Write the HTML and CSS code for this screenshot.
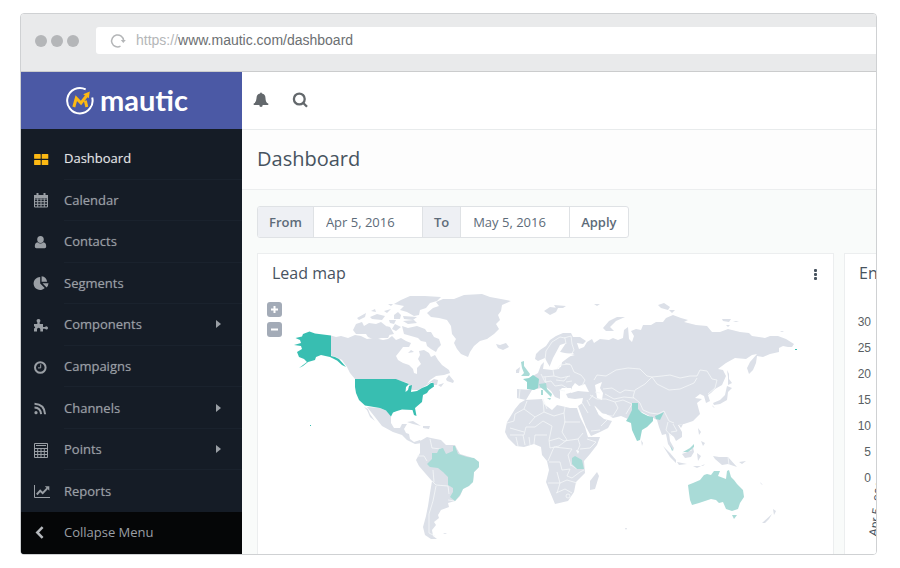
FILE: index.html
```html
<!DOCTYPE html>
<html lang="en">
<head>
<meta charset="utf-8">
<title>Mautic – Dashboard</title>
<link rel="stylesheet" href="styles.css">
</head>
<body>
<div class="window">
  <header class="chrome">
    <div class="dots"><span></span><span></span><span></span></div>
    <div class="address">
      <svg class="reload" viewBox="0 0 16 16"><path d="M10.5 13.2A6 6 0 1 1 13.6 7.5"/><path class="tip" d="M10.8 7h5l-2.5 3z"/></svg>
      <span class="scheme">https://</span><span>www.mautic.com/dashboard</span>
    </div>
  </header>
  <div class="app">
    <aside class="sidebar">
      <a class="brand" href="#">
        <svg viewBox="0 0 30 30"><path class="ring" d="M20.7 3.4A12.7 12.7 0 1 0 27.2 11.600"/><path class="zig" d="M8.800 21L11.300 12.200l4.700 4.800 5.500-7"/><path class="head" d="M18.200 8.200L24.800 5.600l-1 6.600z"/><path class="leg" d="M20.300 14.600l1.500 6.400"/></svg>
        <span>mautic</span>
      </a>
      <nav class="menu">
        <a class="active" href="#"><svg viewBox="0 0 16 16"><path d="M1.700 3h5.400q.6 0 .6.600v3.600q0 .6-.6.600H1.700q-.6 0-.6-.6V3.600q0-.6.600-.6zM9.300 3h5.400q.6 0 .6.600v3.600q0 .6-.6.600H9.300q-.6 0-.6-.6V3.600q0-.6.600-.6zM1.700 9h5.400q.6 0 .6.600v3.800q0 .6-.6.600H1.700q-.6 0-.6-.6V9.600q0-.6.600-.6zM9.300 9h5.400q.6 0 .6.600v3.800q0 .6-.6.600H9.300q-.6 0-.6-.6V9.600q0-.6.600-.6z"/></svg><span>Dashboard</span></a>
        <a href="#"><svg viewBox="0 0 16 16"><path class="line" d="M1.500 3.500h13v11.500h-13zM1.500 7h13M1.500 9.700h13M1.500 12.300h13M4.700 6.500v8.500M8 6.500v8.500M11.300 6.500v8.500"/><path d="M1 3h14v3H1zM3.500 1h2v3.500h-2zM10.500 1h2v3.500h-2z"/></svg><span>Calendar</span></a>
        <a href="#"><svg viewBox="0 0 16 16"><path d="M7.500 2a3.200 3.400 0 0 1 0 7a3.200 3.400 0 0 1 0-7zM4.500 8.300q3 2.400 6 0q2.700.5 2.700 4.200q0 1.700-1.500 1.700H3.300q-1.500 0-1.500-1.700q0-3.700 2.700-4.200z"/></svg><span>Contacts</span></a>
        <a href="#"><svg viewBox="0 0 16 16"><path d="M7.200 2v6.500l4.500 4.600A6.500 6.500 0 1 1 7.200 2zM8.600 1.200a6.300 6.300 0 0 1 5.500 5.600H8.600zM9.500 8.300h6a6.500 6.500 0 0 1-1.900 4.200z"/></svg><span>Segments</span></a>
        <a class="more" href="#"><svg viewBox="0 0 16 16"><path d="M1 7h3.300V5.200q-1.100-1-.6-2.200Q4.200 2 5.500 2t1.800 1q.5 1.200-.6 2.200V7H10v3h2q.8-1 1.900-.6q1.100.4 1.100 1.500t-1.100 1.600q-1.100.4-1.900-.7h-2V14.500H7.300V12.200q-.2-1.500-1.700-1.500T4 12.200v2.300H1v-3l1.200-.8Q2.200 9.500 1 9.300z"/></svg><span>Components</span></a>
        <a href="#"><svg viewBox="0 0 16 16"><circle class="thick" cx="7.300" cy="8.500" r="5.300"/><path class="line" d="M7.700 5.300v3.600H5"/></svg><span>Campaigns</span></a>
        <a class="more" href="#"><svg viewBox="0 0 16 16"><path class="thick" d="M1.500 3.700q10 .4 10.600 10.500M1.500 7.600q6 .3 6.600 6.600"/><circle cx="3" cy="12.700" r="1.600"/></svg><span>Channels</span></a>
        <a class="more" href="#"><svg viewBox="0 0 16 16"><path class="line" d="M1.500 1.500h13v14h-13zM1.500 6.500h13M1.500 9.500h13M1.500 12.500h13M4.700 6v9.500M8 6v9.500M11.300 6v9.500M3 3.500h10"/></svg><span>Points</span></a>
        <a href="#"><svg class="wide" viewBox="0 0 18 16"><path class="line" d="M1.500 2v12.500H17"/><path class="thick" d="M3.800 11.500L7.200 7.700l2.500 2.400 4.500-4.700"/><path d="M11.800 3.300h4.500v4.500z"/></svg><span>Reports</span></a>
      </nav>
      <button class="collapse" type="button"><svg viewBox="0 0 16 16"><path d="M9.600 3.200L4.300 8.500l5.300 5.300"/></svg><span>Collapse Menu</span></button>
    </aside>
    <main class="main">
      <div class="topbar">
        <button type="button" aria-label="Notifications"><svg viewBox="0 0 16 16"><path d="M8 .5q.9 0 .9 1q3.600.7 3.600 4.700q0 3.900 2.800 5.800H.7q2.800-1.900 2.800-5.800Q3.500 2.200 7.100 1.500q0-1 .9-1zM6.200 12.500h3.600Q9.700 15 8 15t-1.800-2.500z"/><path d="M.7 11.500h14.600v1.500H.7z"/></svg></button>
        <button type="button" aria-label="Search"><svg viewBox="0 0 16 16"><circle class="glass" cx="7.300" cy="7" r="5.400"/><path class="glass" d="M11 10.800l4 4"/></svg></button>
      </div>
      <h1>Dashboard</h1>
      <div class="content">
        <form class="range">
          <label for="from">From</label>
          <input id="from" type="text" value="Apr 5, 2016">
          <label for="to">To</label>
          <input id="to" type="text" value="May 5, 2016">
          <button type="button">Apply</button>
        </form>
        <div class="panels">
          <section class="panel">
            <div class="panel-head"><h2>Lead map</h2><button class="kebab" type="button" aria-label="Options"><i></i><i></i><i></i></button></div>
            <div class="map">
              <div class="zoomer"><button type="button" aria-label="Zoom in"><svg viewBox="0 0 15 15"><path d="M4 7.500h7M7.500 4v7"/></svg></button><button type="button" aria-label="Zoom out"><svg viewBox="0 0 15 15"><path d="M4 7.500h7"/></svg></button></div>
              <svg class="world" viewBox="258 290 575 258">
                <g class="land">
                  <path d="M331 333.500L336 335 341 334 348 336 355 333 361 334 367 337 375 336 383 338 388 337 392 334 396 338 401 336 406 339 411 341 409 345 403 345 400 349 396 354 398 358 403 361 409 363 413 367 414 371 417 372 417 366 421 362 418 357 420 353 419 349 424 348 429 351 431 355 435 353 438 358 442 363 449 368 450 371 444 373 436 374 430 378 427 382 434 377 438 378 437 383 433 383 432 380 427 383 418 388 412 388 408 381 400 379 396 377 355 377 350 371 347 365 342 358 336 355 331 353.500z"/>
                  <path d="M446 377L449 373 454 379 453 381 447 379zM438 383L444 381 441 385z"/>
                  <path d="M353 328L356 322 362 320 364 324 369 321 376 322 381 320 386 324 391 330 388 336 381 336 375 338 368 335 366 332 356 332zM357 316L366 311 365 315 359 318zM370 315L377 312 385 314 382 318 372 317zM371 309L375 307 376 310zM384 309L391 307 387 311zM389 318L396 318 394 322 390 321zM395 322L401 325 396 329 392 327zM382 323L390 325 394 332 389 333z"/>
                  <path d="M402 324L408 326 417 324 425 327 427 330 431 330 434 335 439 337 441 343 438 346 436 350 431 347 427 344 426 340 421 339 418 336 411 334 404 332zM403 319L414 318 417 321 408 322zM394 313L398 310 401 313 400 317 394 317zM411 348L414 350 408 351z"/>
                  <path d="M394 302L401 298 410 294 425 294 441 295 437 299 430 301 426 306 420 308 419 313 414 314 407 310 400 308 404 304z"/><path d="M403 314L417 315 413 318 404 317zM388 302L393 302 391 304z"/>
                  <path d="M427 311L433 306 439 304 436 300 443 297 454 297 464 293 482 292 490 295 501 297 511 299 502 303 501 309 498 313 500 318 496 322 499 327 494 332 487 337 480 339 474 344 470 350 468 355 461 352 457 347 454 341 456 337 452 332 451 324 447 318 439 316 431 315z"/>
                  <path d="M496 342L500 343 506 341 509 345 503 348 498 346z"/>
                  <path d="M367 405L380 406 387 409 391 414 391 421 394 426 400 426 402 422 407 422 404 427 406 431 409 432 410 437 414 440 420 438 422 441 415 442 407 438 402 433 393 430 382 424 375 415zM364 405L367 408 370 415 375 419 370 412 368 407zM407 420L413 419 421 424 413 422zM423 424L430 424 429 427 423 426z"/>
                  <path d="M420 439L427 435 431 436 441 438 446 443 455 443 457 447 460 452 470 455 479 460 479 465 474 470 473 480 463 487 460 494 455 499 448 501 449 505 441 508 438 513 439 516 434 520 436 523 432 528 433 534 437 537 431 537 425 533 423 525 426 514 428 504 430 491 432 479 425 471 419 464 416 458 420 451z"/><path d="M443 531L447 531 445 532z"/>
                  <path d="M517 387L532 388 529 393 526 398 521 397 517 396zM516 368L520 365 519 371 516 371z"/>
                  <path d="M536 352L540 348 546 344 550 338 556 334 563 331 571 331 573 335 580 335 586 339 583 342 577 341 579 347 584 345 587 340 592 337 594 341 600 337 609 338 613 336 618 338 623 336 624 328 628 325 629 337 632 340 634 334 631 329 636 327 641 328 643 323 651 323 656 320 663 320 666 316 673 313 681 316 688 318 684 320 696 323 707 324 712 330 720 330 728 327 740 330 749 331 752 334 765 336 770 334 778 334 786 337 794 342 792 345 788 345 783 344 779 346 779 350 770 352 763 355 757 354 756 361 753 368 749 372 747 366 750 360 757 352 752 353 746 357 735 356 726 361 718 367 723 368 726 374 722 383 715 387 711 391 708 393 710 399 706 401 704 394 700 392 695 396 702 397 697 401 700 412 693 419 684 422 678 423 682 430 682 435 676 439 674 435 669 431 670 439 674 446 673 449 668 442 666 432 662 433 659 425 657 418 638 408 631 411 628 417 621 414 613 416 606 412 600 411 595 404 582 401 583 396 575 397 568 396 566 392 573 390 571 386 562 386 560 388 560 397 555 395 551 389 546 385 541 386 532 388 527 386 529 376 538 371 541 363 544 360 543 367 552 368 559 367 561 361 569 355 574 351 564 352 560 350 560 357 554 361 550 365 547 360 545 356 538 359 535 357z"/>
                  <path d="M544 309L550 305 558 306 556 310 550 313zM554 303L566 304 563 306 556 306zM594 302L600 302 597 304zM603 326L609 319 617 315 625 315 616 319 610 325 614 329 606 329zM658 303L664 301 670 305 668 308 661 306zM669 308L675 308 672 311zM722 317L731 317 729 320 723 319zM733 319L739 319 736 320zM726 323L730 323 728 325zM780 329L784 329 782 330z"/>
                  <path d="M727 368L729 372 729 377 732 381 728 383 728 375zM727 384L732 386 728 390 727 398 720 402 714 403 713 401 720 398 725 393zM712 403L715 406 713 405zM698 426L701 430 699 433zM701 439L705 441 703 444zM679 423L683 422 681 426zM641 438L643 441 642 444z"/>
                  <path d="M515 407L520 401 525 398 542 397 544 402 552 408 557 403 570 406 577 406 580 415 585 425 588 435 600 435 597 443 590 452 584 459 585 471 576 480 574 490 568 499 555 502 550 490 546 480 549 468 547 459 542 453 541 445 534 442 524 445 516 444 508 436 505 430 507 420z"/>
                  <path d="M597 470L599 474 595 487 590 488 590 479z"/><path d="M578 404L587 398 594 403 599 413 604 417 612 419 608 426 600 430 591 434 586 425z"/>
                  <path d="M663 444L670 451 676 458 676 461 670 455zM677 460L687 462 679 463zM682 452L687 450 693 445 694 450 691 455 685 456zM697 451L701 454 698 459zM693 464L703 464 705 462 697 466zM713 454L719 455 728 455 737 465 728 462 722 463 715 457zM739 460L746 459 742 462zM760 480L763 483 761 482zM773 507L776 509 774 513zM762 521L772 512 769 517 765 521zM625 526L627 526 626 528z"/>
                </g>
                <g class="sea">
                  <path d="M572 385L575 381 579 384 585 382 589 390 578 389 571 391zM595 383L602 380 600 386 603 391 602 398 597 396zM553 356L560 343 566 341 560 350 575 353 563 356 561 365 555 367 549 366zM595 404L604 413 614 414 606 415 599 413zM576 448L579 449 578 452z"/>
                </g>
                <g class="borders">
                  <path d="M545 358L546 349 552 340 560 335 565 336 566 342M564 336L571 334 572 342 574 348 571 353M565 361L571 363 574 370 581 373 585 378 582 384M553 368L554 374 561 376 570 374M541 372L545 380 551 379 555 384 562 383 567 386M543 375L554 374M546 381L545 375M556 378L564 379 568 374M559 388L565 389M557 367L560 363 570 362M566 380L572 379M594 378L597 373 606 374 616 368 628 366 640 367 647 374 652 375 662 374 670 373 680 376 690 374 697 374 700 368 707 369 712 377 717 378 715 386 708 392M652 375L645 382 635 388 633 395 640 401 643 408 650 411 658 412 664 409 669 419 674 421M652 375L657 382 669 388 680 387 694 381 697 376M603 387L612 386 620 391 625 388 634 389M605 392L614 397 624 395 634 396M590 393L597 397 606 397 615 400 618 406 613 414M615 400L623 398 632 402 626 412M589 398L593 393M587 398L590 404M668 420L666 428 671 434M673 422L677 429 671 430M595 390L600 391"/>
                  <path d="M527 399L524 407 515 412 514 419 507 421M524 407L535 415 544 410 543 397M544 410L554 414 564 411 565 405M564 411L565 420 562 430 567 438 559 444 550 446 549 438 552 424 543 419 535 425 526 425 524 433 510 433M535 415L529 422M564 420L580 420M534 442L535 433 547 433M549 439L559 436 564 439 578 437 583 431M578 437L580 443 577 450M587 437L596 440 590 446 580 447M549 460L560 460 562 468 570 467M548 481L560 481 557 470M560 481L557 491M560 481L567 478 577 481M556 491L565 487 572 491M571 464L568 453 572 447 554 445 548 459M570 467L567 474 572 476 580 470 584 468M571 463L577 467M516 435L518 444M523 433L525 443M529 435L530 443M543 397L547 407M510 426L524 430M417 454L424 454 427 459M430 437L432 446 441 447M432 479L436 483 448 484M436 484L433 499 429 512 429 531 435 534M433 468L434 480M448 484L449 492M448 498L455 499M582 401L588 411M601 424L607 418M591 429L600 428M728 455L729 463M520 387L519 397M682 451L692 448"/>
                  <circle cx="568" cy="494" r="2"/>
                </g>
                <g class="usa">
                  <path d="M295.500 336L302 334.500 303 332 309.500 329.500 315 331.500 331 333.500V354L335 355 339 357 346 365 342 363 337 358.500 330 355 321 353 316 355 315 358 308 360 303 364 299 366 307 360 304 357 299 355 297 350 302 347 301 344 294 343 301 341 300 338z"/>
                  <path d="M355 377H396L401 379 409 382 406 385 405.500 390 408 388 409 384 412 383 411 390 417 389 422 386 427 384 431 381 433.500 381 434 384.500 429 388 427 391 423 393 422 400 415 406 416.500 414 414 413 412.500 408 402 407.500 397 409 393 410.500 391 414.500 386 408.500 380 406 371 404.500 365 403.500 359 398 356 391 355 385z"/><path d="M310 423h1v1h-1zM795 347h2v1h-2z"/>
                </g>
                <g class="mid">
                  <path d="M632 401L638 401 638 407 642 411 648 414 653 415 653 419 647 425 642 428 640 438 637 439 632 428 631 421 626 419 628 416 632 408zM655 414L660 412 664 410 660 418 656 417z"/>
                  <path d="M523 377L529 376 533 373 539 377 538 386 534 388 527 387 527 380z"/>
                </g>
                <g class="light">
                  <path d="M521 360L524 359 524 364 530 372 529 374 521 374 524 371 522 366zM539 382L546 381 547 387 552 392 551 395 544 388 540 385zM541 388h2v5h-2zM547 396L551 396 550 398z"/>
                  <path d="M427 462L432 457 432 451 437 451 439 447 443 446 446 452 453 449 453 444 455 444 458 452 467 455 474 456 479 460 479 465 474 470 473 480 469 484 463 487 460 493 455 499 450 495 453 490 453 486 448 483 448 475 443 470 438 466 430 465z"/>
                  <path d="M572 456L575 454 582 458 584 467 577 467 572 462z"/>
                  <path d="M688 483L693 481 700 478 704 473 707 472 711 473 714 469 720 469 718 474 726 477 727 469 729 468 731 475 734 478 737 482 743 488 744 495 740 501 738 507 732 509 726 507 723 500 719 501 716 498 711 497 705 499 699 501 692 503 690 498 689 491zM732 513L737 513 734 517zM670 443L673 448 672 449zM683 450L690 446 694 442 694 445 688 450z"/>
                </g>
              </svg>
            </div>
          </section>
          <section class="panel side">
            <h2>Engagement</h2>
            <ul class="ticks"><li>30</li><li>25</li><li>20</li><li>15</li><li>10</li><li>5</li><li>0</li></ul>
            <span class="date">Apr 5, 2016</span>
          </section>
        </div>
      </div>
    </main>
  </div>
</div>
</body>
</html>
```
FILE: styles.css
```css
* { box-sizing: border-box; }
body { margin: 0; background: #fff; font-family: "Open Sans", "Noto Sans", sans-serif; color: #47535f; }
button, input { font: inherit; color: inherit; border: 0; padding: 0; margin: 0; background: none; }
a { color: inherit; text-decoration: none; }
h1, h2 { margin: 0; font-weight: 400; }
svg { display: block; flex: none; }

.window { display: flex; flex-direction: column; height: calc(100vh - 26px); min-height: 480px; margin: 13px 23px 13px 20px; border: 1px solid #cfd1d3; border-radius: 4px; overflow: hidden; }
.chrome { flex: none; display: flex; align-items: center; gap: 17px; height: 58px; padding: 0 0 4px 14px; background: #e9eaeb; border-bottom: 1px solid #cbcccd; }
.dots { display: flex; gap: 4px; }
.dots span { width: 12px; height: 12px; border-radius: 50%; background: #b4b6b8; }
.address { flex: 1; display: flex; align-items: center; height: 27px; padding-left: 14px; background: #fff; border-radius: 3px 0 0 3px; font: 14px/27px "Liberation Sans", Arial, sans-serif; color: #6c6f72; }
.reload { width: 16px; height: 16px; margin-right: 10px; }
.reload path { fill: none; stroke: #b4b6b8; stroke-width: 1.500; }
.reload .tip { fill: #b4b6b8; stroke: none; }
.scheme { color: #b4b6b8; }

.app { flex: 1; display: flex; min-height: 0; }
.sidebar { flex: none; display: flex; flex-direction: column; width: 221px; background: #151c26; color: #9a9fa5; font-size: 13px; }
.brand { flex: none; display: flex; align-items: center; justify-content: center; gap: 5px; height: 57px; padding-right: 10px; background: #4b59a5; color: #fff; font: 700 29px/40px Lato, sans-serif; }
.brand svg { width: 30px; height: 30px; }
.brand span { margin-bottom: 2px; }
.brand path { fill: none; stroke: #fdb913; stroke-width: 3; }
.brand .ring { stroke: #fff; stroke-width: 2; }
.brand .head { fill: #fdb913; stroke: none; }
.menu { flex: 1; display: grid; grid-auto-rows: 1fr; padding-top: 9px; }
.menu a { display: flex; align-items: center; padding-left: 12px; }
.menu svg { width: 16px; height: 16px; margin-right: 15px; fill: currentColor; }
.menu svg.wide { width: 18px; margin-right: 13px; }
.menu span { flex: 1; align-self: stretch; display: flex; align-items: center; border-bottom: 1px solid #1a222d; text-shadow: 0 0 1px rgba(154, 159, 165, .5); }
.menu a:last-child span { border-bottom: 0; }
.menu .active span { color: #e4e5e7; }
.menu .active svg { fill: #fdb913; }
.menu .line { fill: none; stroke: currentColor; stroke-width: 1; }
.menu .thick { fill: none; stroke: currentColor; stroke-width: 2; }
.menu .more span::after { content: ""; margin-left: auto; margin-right: 21px; border-left: 5px solid #9a9fa5; border-top: 4px solid transparent; border-bottom: 4px solid transparent; }
.collapse { flex: none; display: flex; align-items: center; height: 42px; padding: 0 0 2px 12px; background: #050607; }
.collapse svg { width: 16px; height: 16px; margin-right: 15px; fill: none; stroke: #b6b9bd; stroke-width: 2.500; }

.main { flex: 1; min-width: 0; display: flex; flex-direction: column; background: #f9fbfa; }
.topbar { flex: none; display: flex; align-items: center; gap: 23px; height: 58px; padding: 0 11px 2px; background: #fff; border-bottom: 1px solid #e8ebec; }
.topbar svg { width: 16px; height: 16px; fill: #63686c; }
.topbar .glass { fill: none; stroke: #63686c; stroke-width: 2.300; }
h1 { flex: none; height: 60px; padding-left: 15px; background: #fdfdfd; border-bottom: 1px solid #eceeef; font-size: 20px; line-height: 58px; }
.content { flex: 1; min-height: 0; display: flex; flex-direction: column; gap: 15px; padding: 16px 0 0 15px; }
.range { flex: none; align-self: flex-start; display: flex; height: 32px; border: 1px solid #dfe2e5; border-radius: 3px; background: #fff; overflow: hidden; font-size: 13px; line-height: 30px; color: #5d6b79; }
.range > * + * { border-left: 1px solid #dfe2e5; }
.range label { padding: 0 11px; background: #eef0f4; font-weight: 600; }
.range input { width: 109px; padding-left: 12px; }
.range button { padding: 0 11px; font-weight: 600; }

.panels { flex: 1; min-height: 0; display: grid; grid-template-columns: minmax(0, 1fr) 32px; gap: 10px; }
.panel { min-height: 0; background: #fff; border: 1px solid #eceeef; border-bottom: 0; overflow: hidden; }
.panel-head { display: flex; justify-content: space-between; padding-right: 16px; }
h2 { padding-left: 14px; font-size: 16px; line-height: 38px; white-space: nowrap; }
.kebab { display: flex; flex-direction: column; justify-content: center; gap: 1px; padding-top: 3px; }
.kebab i { width: 3px; height: 3px; border-radius: 1px; background: #47535f; }
.map { position: relative; }
.zoomer { position: absolute; left: 9px; top: 10px; display: grid; gap: 5px; }
.zoomer button { width: 15px; height: 15px; border-radius: 3px; background: #a3abb7; }
.zoomer path { stroke: #fff; stroke-width: 2; }
.world { width: 100%; height: auto; }
.land { fill: #dce0e8; }
.sea { fill: #fff; }
.borders { fill: none; stroke: #f5f7f9; stroke-width: .8; }
.usa { fill: #38beb1; }
.mid { fill: #95d6d0; }
.light { fill: #a9dbd7; }
.side { border-right: 0; }
.ticks { list-style: none; width: 26px; margin: 17px 0 0; padding: 0; font: 12px/26px "Liberation Sans", Arial, sans-serif; text-align: right; color: #5a5f64; }
.date { display: block; width: 70px; margin: 34px 0 0 34px; font: 12px/12px "Liberation Sans", Arial, sans-serif; white-space: nowrap; transform: rotate(-82deg); transform-origin: 0 100%; }
```
